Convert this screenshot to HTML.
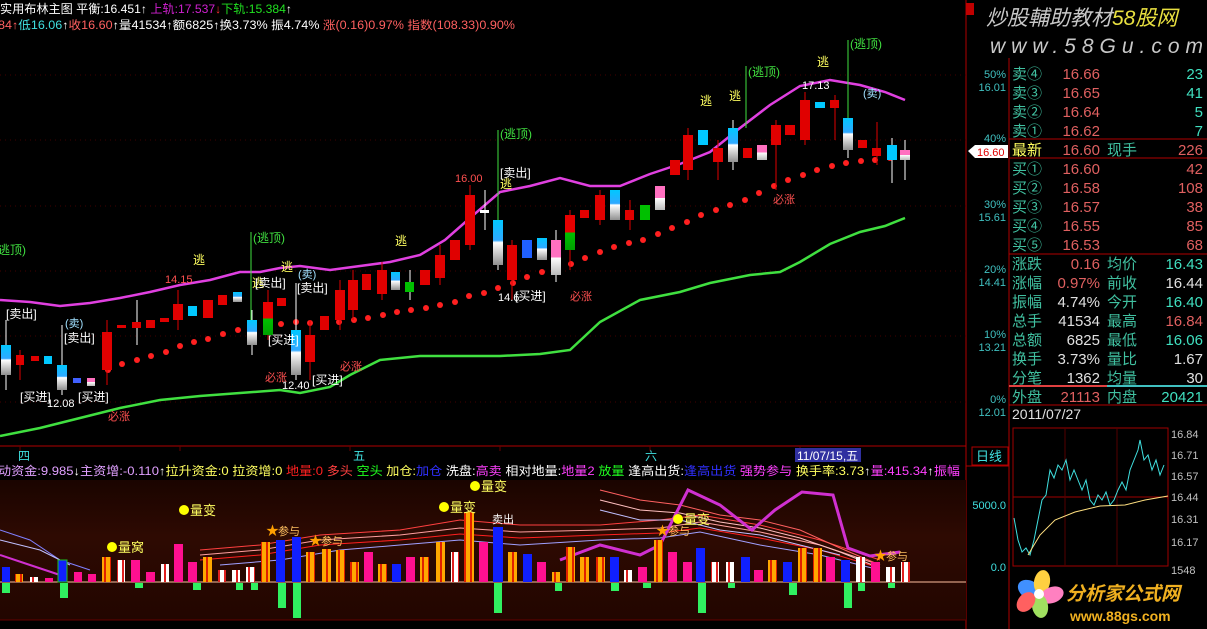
<!DOCTYPE html>
<html><head><meta charset="utf-8"><style>
body{margin:0;background:#000;width:1207px;height:629px;overflow:hidden;font-family:"Liberation Sans","Noto Sans CJK SC",sans-serif}
svg{position:absolute;left:0;top:0}
text{font-family:"Liberation Sans","Noto Sans CJK SC",sans-serif}
</style></head><body>
<svg width="1207" height="629" viewBox="0 0 1207 629" xmlns="http://www.w3.org/2000/svg">
<defs>
<linearGradient id="cw" x1="0" y1="0" x2="0" y2="1"><stop offset="0" stop-color="#00c8ff"/><stop offset=".45" stop-color="#30a8ff"/><stop offset=".5" stop-color="#fff"/><stop offset="1" stop-color="#909090"/></linearGradient>
<linearGradient id="rg" x1="0" y1="0" x2="0" y2="1"><stop offset="0" stop-color="#e80000"/><stop offset=".5" stop-color="#e80000"/><stop offset=".5" stop-color="#00c000"/><stop offset="1" stop-color="#00a000"/></linearGradient>
<linearGradient id="pw" x1="0" y1="0" x2="0" y2="1"><stop offset="0" stop-color="#ff70c0"/><stop offset=".5" stop-color="#ff70c0"/><stop offset=".5" stop-color="#fff"/><stop offset="1" stop-color="#bbb"/></linearGradient>
<linearGradient id="bg2" x1="0" y1="0" x2="0" y2="1"><stop offset="0" stop-color="#1a0400"/><stop offset=".4" stop-color="#2e0a02"/><stop offset="1" stop-color="#220600"/></linearGradient>
<pattern id="po" width="6" height="4" patternUnits="userSpaceOnUse"><rect width="6" height="4" fill="#ffa800"/><rect x="2" width="2" height="4" fill="#e02000"/></pattern>
<pattern id="pwt" width="6" height="4" patternUnits="userSpaceOnUse"><rect width="6" height="4" fill="#fff"/><rect x="2" width="2" height="4" fill="#e02020"/></pattern>
</defs>
<rect x="0" y="0" width="966" height="446" fill="#000"/>
<text x="0" y="13" font-size="12" fill="#fff" textLength="292" lengthAdjust="spacingAndGlyphs">实用布林主图 平衡:16.451↑ <tspan fill="#d020d0">上轨:17.537</tspan><tspan fill="#ff3030">↓</tspan><tspan fill="#20e020">下轨:15.384</tspan>↑</text>
<text x="-2" y="29" font-size="11.5" fill="#fff" textLength="517" lengthAdjust="spacingAndGlyphs"><tspan fill="#ff6060">84↑</tspan><tspan fill="#40e0e0">低16.06</tspan>↑<tspan fill="#ff6060">收16.60</tspan>↑量41534↑额6825↑换3.73% 振4.74% <tspan fill="#ff6060">涨(0.16)0.97% 指数(108.33)0.90%</tspan></text>
<line x1="966" y1="0" x2="966" y2="629" stroke="#b00000"/>
<line x1="0" y1="446" x2="966" y2="446" stroke="#b00000"/>
<g stroke="#400" stroke-dasharray="1,4"><line x1="0" y1="75" x2="966" y2="75"/><line x1="0" y1="140" x2="966" y2="140"/><line x1="0" y1="206" x2="966" y2="206"/><line x1="0" y1="271" x2="966" y2="271"/><line x1="0" y1="336" x2="966" y2="336"/><line x1="0" y1="402" x2="966" y2="402"/></g>
<polyline fill="none" stroke="#e040e0" stroke-width="2.5" points="0,300 30,302 60,306 90,303 120,298 150,292 180,285 210,280 240,272 260,272 280,268 300,266 330,270 360,266 390,262 420,255 445,240 470,218 500,192 530,186 560,178 590,186 620,186 650,174 680,164 710,152 740,128 770,105 800,86 830,80 860,85 885,92 905,100"/>
<polyline fill="none" stroke="#40e040" stroke-width="2.5" points="0,436 40,428 80,418 120,408 160,400 200,396 240,393 280,390 300,393 330,387 350,375 380,360 420,356 460,356 500,356 540,354 570,350 600,322 640,300 680,292 710,283 750,275 780,272 800,262 830,244 860,232 885,226 905,218"/>
<g fill="#ff2020">
<circle cx="108" cy="370" r="3"/><circle cx="122" cy="364" r="3"/><circle cx="137" cy="360" r="3"/><circle cx="151" cy="356" r="3"/><circle cx="166" cy="352" r="3"/><circle cx="180" cy="346" r="3"/><circle cx="194" cy="342" r="3"/><circle cx="208" cy="339" r="3"/><circle cx="223" cy="334" r="3"/><circle cx="238" cy="330" r="3"/><circle cx="252" cy="327" r="3"/><circle cx="267" cy="326" r="3"/><circle cx="281" cy="324" r="3"/><circle cx="296" cy="322" r="3"/><circle cx="310" cy="323" r="3"/><circle cx="325" cy="324" r="3"/><circle cx="339" cy="322" r="3"/><circle cx="354" cy="320" r="3"/><circle cx="368" cy="318" r="3"/><circle cx="383" cy="315" r="3"/><circle cx="397" cy="312" r="3"/><circle cx="411" cy="310" r="3"/><circle cx="426" cy="308" r="3"/><circle cx="440" cy="305" r="3"/><circle cx="455" cy="302" r="3"/><circle cx="469" cy="296" r="3"/><circle cx="484" cy="293" r="3"/><circle cx="498" cy="288" r="3"/><circle cx="513" cy="283" r="3"/><circle cx="527" cy="277" r="3"/><circle cx="542" cy="272" r="3"/><circle cx="556" cy="268" r="3"/><circle cx="571" cy="264" r="3"/><circle cx="585" cy="258" r="3"/><circle cx="600" cy="252" r="3"/><circle cx="614" cy="247" r="3"/><circle cx="629" cy="243" r="3"/><circle cx="643" cy="240" r="3"/><circle cx="658" cy="234" r="3"/><circle cx="672" cy="228" r="3"/><circle cx="687" cy="222" r="3"/><circle cx="701" cy="215" r="3"/><circle cx="716" cy="210" r="3"/><circle cx="730" cy="205" r="3"/><circle cx="745" cy="200" r="3"/><circle cx="759" cy="193" r="3"/><circle cx="774" cy="186" r="3"/><circle cx="788" cy="180" r="3"/><circle cx="803" cy="175" r="3"/><circle cx="817" cy="170" r="3"/><circle cx="832" cy="166" r="3"/><circle cx="846" cy="163" r="3"/><circle cx="861" cy="161" r="3"/><circle cx="875" cy="160" r="3"/><circle cx="890" cy="158" r="3"/><circle cx="904" cy="157" r="3"/>
</g>
<g stroke-width="1">
<g stroke="#fff"><line x1="6" y1="330" x2="6" y2="390"/><line x1="62" y1="325" x2="62" y2="395"/><line x1="252" y1="310" x2="252" y2="355"/><line x1="296" y1="305" x2="296" y2="380"/><line x1="498" y1="200" x2="498" y2="270"/><line x1="556" y1="230" x2="556" y2="282"/><line x1="733" y1="120" x2="733" y2="170"/><line x1="848" y1="108" x2="848" y2="158"/><line x1="892" y1="138" x2="892" y2="183"/><line x1="905" y1="140" x2="905" y2="180"/><line x1="410" y1="270" x2="410" y2="300"/><line x1="137" y1="300" x2="137" y2="345"/><line x1="485" y1="190" x2="485" y2="230"/></g>
<g stroke="#e00000"><line x1="20" y1="350" x2="20" y2="380"/><line x1="107" y1="320" x2="107" y2="385"/><line x1="178" y1="290" x2="178" y2="330"/><line x1="268" y1="290" x2="268" y2="340"/><line x1="310" y1="320" x2="310" y2="380"/><line x1="340" y1="280" x2="340" y2="330"/><line x1="353" y1="270" x2="353" y2="320"/><line x1="382" y1="262" x2="382" y2="300"/><line x1="440" y1="245" x2="440" y2="285"/><line x1="470" y1="185" x2="470" y2="250"/><line x1="512" y1="240" x2="512" y2="300"/><line x1="570" y1="210" x2="570" y2="270"/><line x1="600" y1="190" x2="600" y2="225"/><line x1="688" y1="128" x2="688" y2="180"/><line x1="718" y1="140" x2="718" y2="180"/><line x1="776" y1="120" x2="776" y2="190"/><line x1="805" y1="92" x2="805" y2="145"/><line x1="835" y1="95" x2="835" y2="140"/><line x1="877" y1="122" x2="877" y2="165"/><line x1="630" y1="200" x2="630" y2="230"/></g>
</g>
<g>
<rect x="1" y="345" width="10" height="30" fill="url(#cw)"/>
<rect x="16" y="355" width="8" height="10" fill="#e00000"/>
<rect x="31" y="356" width="8" height="5" fill="#e00000"/>
<rect x="44" y="356" width="8" height="8" fill="#00c8ff"/>
<rect x="57" y="365" width="10" height="25" fill="url(#cw)"/>
<rect x="73" y="378" width="8" height="5" fill="#4060ff"/>
<rect x="87" y="378" width="8" height="8" fill="url(#pw)"/>
<rect x="102" y="332" width="10" height="38" fill="#e00000"/>
<rect x="117" y="325" width="9" height="3" fill="#e00000"/>
<rect x="132" y="322" width="9" height="6" fill="#e00000"/>
<rect x="146" y="320" width="9" height="8" fill="#e00000"/>
<rect x="160" y="318" width="9" height="4" fill="#e00000"/>
<rect x="173" y="304" width="10" height="16" fill="#e00000"/>
<rect x="188" y="306" width="9" height="10" fill="#00c8ff"/>
<rect x="203" y="300" width="10" height="18" fill="#e00000"/>
<rect x="218" y="295" width="9" height="10" fill="#e00000"/>
<rect x="233" y="292" width="9" height="10" fill="url(#cw)"/>
<rect x="247" y="320" width="10" height="25" fill="url(#cw)"/>
<rect x="263" y="302" width="10" height="33" fill="url(#rg)"/>
<rect x="277" y="298" width="9" height="8" fill="#e00000"/>
<rect x="291" y="330" width="10" height="45" fill="url(#cw)"/>
<rect x="305" y="335" width="10" height="27" fill="#e00000"/>
<rect x="320" y="316" width="9" height="14" fill="#e00000"/>
<rect x="335" y="290" width="10" height="30" fill="#e00000"/>
<rect x="348" y="280" width="10" height="30" fill="#e00000"/>
<rect x="362" y="274" width="9" height="16" fill="#e00000"/>
<rect x="377" y="270" width="10" height="24" fill="#e00000"/>
<rect x="391" y="272" width="9" height="18" fill="url(#cw)"/>
<rect x="405" y="282" width="9" height="10" fill="#00c000"/>
<rect x="420" y="270" width="10" height="15" fill="#e00000"/>
<rect x="435" y="255" width="10" height="23" fill="#e00000"/>
<rect x="450" y="240" width="10" height="20" fill="#e00000"/>
<rect x="465" y="195" width="10" height="50" fill="#e00000"/>
<rect x="480" y="210" width="9" height="3" fill="#fff"/>
<rect x="493" y="220" width="10" height="45" fill="url(#cw)"/>
<rect x="507" y="245" width="10" height="35" fill="#e00000"/>
<rect x="522" y="240" width="10" height="18" fill="#2060ff"/>
<rect x="537" y="238" width="10" height="22" fill="url(#cw)"/>
<rect x="551" y="240" width="10" height="35" fill="url(#pw)"/>
<rect x="565" y="215" width="10" height="35" fill="url(#rg)"/>
<rect x="580" y="210" width="9" height="8" fill="#e00000"/>
<rect x="595" y="195" width="10" height="25" fill="#e00000"/>
<rect x="610" y="190" width="10" height="30" fill="url(#cw)"/>
<rect x="625" y="210" width="9" height="10" fill="#e00000"/>
<rect x="640" y="205" width="10" height="15" fill="#00c000"/>
<rect x="655" y="186" width="10" height="24" fill="url(#pw)"/>
<rect x="670" y="160" width="10" height="15" fill="#e00000"/>
<rect x="683" y="135" width="10" height="35" fill="#e00000"/>
<rect x="698" y="130" width="10" height="15" fill="#00c8ff"/>
<rect x="713" y="148" width="10" height="14" fill="#e00000"/>
<rect x="728" y="128" width="10" height="34" fill="url(#cw)"/>
<rect x="743" y="148" width="9" height="10" fill="#e00000"/>
<rect x="757" y="145" width="10" height="15" fill="url(#pw)"/>
<rect x="771" y="125" width="10" height="20" fill="#e00000"/>
<rect x="785" y="125" width="10" height="10" fill="#e00000"/>
<rect x="800" y="100" width="10" height="40" fill="#e00000"/>
<rect x="815" y="102" width="10" height="6" fill="#00c8ff"/>
<rect x="830" y="100" width="9" height="8" fill="#e00000"/>
<rect x="843" y="118" width="10" height="32" fill="url(#cw)"/>
<rect x="858" y="140" width="9" height="8" fill="#e00000"/>
<rect x="872" y="148" width="9" height="8" fill="#e00000"/>
<rect x="887" y="145" width="10" height="15" fill="#00c8ff"/>
<rect x="900" y="150" width="10" height="10" fill="url(#pw)"/>
</g>
<g stroke="#40e040"><line x1="251" y1="232" x2="251" y2="320"/><line x1="498" y1="130" x2="498" y2="220"/><line x1="746" y1="66" x2="746" y2="128"/><line x1="848" y1="40" x2="848" y2="118"/></g>
<g stroke="#fff"><line x1="6" y1="320" x2="6" y2="345"/><line x1="62" y1="330" x2="62" y2="365"/><line x1="296" y1="283" x2="296" y2="330"/></g>
<g font-size="12">
<text x="-6" y="254" fill="#40e040">(逃顶)</text>
<text x="253" y="242" fill="#40e040">(逃顶)</text>
<text x="500" y="138" fill="#40e040">(逃顶)</text>
<text x="748" y="76" fill="#40e040">(逃顶)</text>
<text x="850" y="48" fill="#40e040">(逃顶)</text>
<g fill="#ffff60"><text x="193" y="264">逃</text><text x="281" y="271">逃</text><text x="395" y="245">逃</text><text x="500" y="188">逃</text><text x="700" y="105">逃</text><text x="729" y="100">逃</text><text x="817" y="66">逃</text><text x="252" y="287">逃</text></g>
<g fill="#fff"><text x="6" y="318">[卖出]</text><text x="64" y="342">[卖出]</text><text x="255" y="287">[卖出]</text><text x="297" y="292">[卖出]</text><text x="500" y="177">[卖出]</text>
<text x="20" y="401">[买进]</text><text x="78" y="401">[买进]</text><text x="268" y="344">[买进]</text><text x="312" y="384">[买进]</text><text x="515" y="300">[买进]</text></g>
<g fill="#a0e0ff" font-size="11"><text x="65" y="327">(卖)</text><text x="298" y="278">(卖)</text><text x="863" y="97">(卖)</text></g>
<g fill="#fff" font-size="11"><text x="47" y="407">12.08</text><text x="282" y="389">12.40</text><text x="498" y="301">14.6</text><text x="802" y="89">17.13</text></g>
<g fill="#ff5050" font-size="11"><text x="165" y="283">14.15</text><text x="455" y="182">16.00</text><text x="108" y="420">必涨</text><text x="265" y="381">必涨</text><text x="340" y="370">必涨</text><text x="570" y="300">必涨</text><text x="773" y="203">必涨</text></g>
</g>
<g font-size="11" fill="#40c0c0" text-anchor="end">
<text x="1006" y="78">50%</text><text x="1006" y="91">16.01</text>
<text x="1006" y="142">40%</text>
<text x="1006" y="208">30%</text><text x="1006" y="221">15.61</text>
<text x="1006" y="273">20%</text><text x="1006" y="286">14.41</text>
<text x="1006" y="338">10%</text><text x="1006" y="351">13.21</text>
<text x="1006" y="403">0%</text><text x="1006" y="416">12.01</text>
</g>
<polygon points="968,151 975,145 1008,145 1008,158 975,158" fill="#fff"/>
<text x="977" y="156" font-size="11" fill="#e00000">16.60</text>
<rect x="966" y="3" width="8" height="12" fill="#c00000"/>
<text x="986" y="25" font-size="21" font-style="italic" fill="#c8c8c8">炒股輔助教材<tspan fill="#e8e040">58股网</tspan></text>
<text x="990" y="53" font-size="21" font-style="italic" fill="#c8c8c8" letter-spacing="6">www.58Gu.com</text>
<line x1="1009" y1="58" x2="1009" y2="629" stroke="#b00000"/>
<g stroke="#b00000"><line x1="1009" y1="139" x2="1207" y2="139"/><line x1="1009" y1="158" x2="1207" y2="158"/><line x1="1009" y1="254" x2="1207" y2="254"/><line x1="1009" y1="405" x2="1207" y2="405"/></g>
<line x1="1009" y1="386" x2="1107" y2="386" stroke="#e04040" stroke-width="2"/><line x1="1107" y1="386" x2="1207" y2="386" stroke="#40c0c0" stroke-width="2"/>
<g font-size="15">
<g fill="#40c0a0"><text x="1012" y="79">卖④</text><text x="1012" y="98">卖③</text><text x="1012" y="117">卖②</text><text x="1012" y="136">卖①</text>
<text x="1012" y="174">买①</text><text x="1012" y="193">买②</text><text x="1012" y="212">买③</text><text x="1012" y="231">买④</text><text x="1012" y="250">买⑤</text>
<text x="1012" y="269">涨跌</text><text x="1012" y="288">涨幅</text><text x="1012" y="307">振幅</text><text x="1012" y="326">总手</text><text x="1012" y="345">总额</text><text x="1012" y="364">换手</text><text x="1012" y="383">分笔</text><text x="1012" y="402">外盘</text>
<text x="1107" y="155">现手</text><text x="1107" y="269">均价</text><text x="1107" y="288">前收</text><text x="1107" y="307">今开</text><text x="1107" y="326">最高</text><text x="1107" y="345">最低</text><text x="1107" y="364">量比</text><text x="1107" y="383">均量</text><text x="1107" y="402">内盘</text></g>
<text x="1012" y="155" fill="#ffff60">最新</text>
<g fill="#e06060" text-anchor="end"><text x="1100" y="79">16.66</text><text x="1100" y="98">16.65</text><text x="1100" y="117">16.64</text><text x="1100" y="136">16.62</text><text x="1100" y="155">16.60</text><text x="1100" y="174">16.60</text><text x="1100" y="193">16.58</text><text x="1100" y="212">16.57</text><text x="1100" y="231">16.55</text><text x="1100" y="250">16.53</text><text x="1100" y="269">0.16</text><text x="1100" y="288">0.97%</text><text x="1100" y="402">21113</text>
<text x="1203" y="155">226</text><text x="1203" y="174">42</text><text x="1203" y="193">108</text><text x="1203" y="212">38</text><text x="1203" y="231">85</text><text x="1203" y="250">68</text><text x="1203" y="326">16.84</text></g>
<g fill="#e0e0e0" text-anchor="end"><text x="1100" y="307">4.74%</text><text x="1100" y="326">41534</text><text x="1100" y="345">6825</text><text x="1100" y="364">3.73%</text><text x="1100" y="383">1362</text><text x="1203" y="288">16.44</text><text x="1203" y="364">1.67</text><text x="1203" y="383">30</text></g>
<g fill="#40e0c0" text-anchor="end"><text x="1203" y="79">23</text><text x="1203" y="98">41</text><text x="1203" y="117">5</text><text x="1203" y="136">7</text><text x="1203" y="269">16.43</text><text x="1203" y="307">16.40</text><text x="1203" y="345">16.06</text><text x="1203" y="402">20421</text></g>
<text x="1012" y="419" fill="#e0e0e0" font-size="14">2011/07/27</text>
</g>
<g font-size="12" fill="#40e0e0"><text x="18" y="460">四</text><text x="353" y="460">五</text><text x="645" y="460">六</text></g>
<g stroke="#600"><line x1="20" y1="446" x2="20" y2="451"/><line x1="180" y1="446" x2="180" y2="451"/><line x1="350" y1="446" x2="350" y2="451"/><line x1="500" y1="446" x2="500" y2="451"/><line x1="650" y1="446" x2="650" y2="451"/><line x1="800" y1="446" x2="800" y2="451"/></g>
<rect x="795" y="448" width="66" height="14" fill="#3030a0"/>
<text x="797" y="460" font-size="12" fill="#fff">11/07/15,五</text>
<rect x="972" y="447" width="36" height="18" fill="#000" stroke="#b00000"/>
<text x="976" y="461" font-size="13" fill="#40e0e0">日线</text>
<text x="-2" y="475" font-size="12" fill="#fff" textLength="962" lengthAdjust="spacingAndGlyphs"><tspan fill="#e0a0ff">动资金:9.985</tspan>↓<tspan fill="#e0a0ff">主资增:-0.110</tspan>↑<tspan fill="#ffff60">拉升资金:0 拉资增:0</tspan> <tspan fill="#ff2020">地量:0</tspan> <tspan fill="#ff4040">多头</tspan> <tspan fill="#20ff20">空头</tspan> <tspan fill="#ffff60">加仓:</tspan><tspan fill="#3030ff">加仓</tspan> 洗盘:<tspan fill="#ff40ff">高卖</tspan> 相对地量:<tspan fill="#ff40ff">地量2</tspan> <tspan fill="#20ff20">放量</tspan> 逢高出货:<tspan fill="#3030ff">逢高出货</tspan> <tspan fill="#ff40ff">强势参与</tspan> <tspan fill="#ffff60">换手率:3.73</tspan>↑<tspan fill="#ff40ff">量:415.34</tspan>↑<tspan fill="#ff40ff">振幅</tspan></text>
<rect x="0" y="480" width="966" height="140" fill="url(#bg2)"/>
<line x1="0" y1="620" x2="966" y2="620" stroke="#600"/>
<g fill="none" stroke-width="1">
<polyline stroke="#8080ff" points="0,530 30,540 60,560 90,570"/>
<polyline stroke="#c0c0ff" points="0,540 40,550 70,565"/>
<polyline stroke="#ff4040" points="200,550 260,545 320,535 400,530 460,520 520,525 600,525 660,520 700,515 760,525 820,540 880,560"/>
<polyline stroke="#ffa0a0" points="200,555 260,550 320,540 400,535 460,528 520,532 600,530 660,528 700,522 760,532 820,545 880,565"/>
<polyline stroke="#ff2020" points="200,560 260,555 320,545 400,540 460,534 520,538 600,535 660,533 700,528 760,538 820,550 880,568"/>
<polyline stroke="#a0a0ff" points="220,565 280,560 340,550 400,545 460,540 520,545 600,540 660,538 700,532 760,545 820,555 880,570"/>
<polyline stroke="#ff6060" points="600,490 640,500 680,505 720,515 760,520 800,530 840,548 880,565"/>
<polyline stroke="#ffc0c0" points="600,500 640,510 680,513 720,522 760,528 800,538 840,552 880,568"/>
<polyline stroke="#c0c0ff" points="600,510 640,520 680,520 720,530 760,535 800,545 840,555"/>
</g>
<polyline fill="none" stroke="#d030d0" stroke-width="3" points="560,560 600,545 640,555 660,545 688,490 720,505 752,530 775,510 802,492 833,495 848,548 870,556 900,552"/>
<polyline fill="none" stroke="#d030d0" stroke-width="2" points="0,555 30,565 60,575"/>
<line x1="0" y1="582" x2="966" y2="582" stroke="#ffc0a0"/>
<g>
<rect x="2" y="567" width="8" height="15" fill="#1020ff"/><rect x="15" y="574" width="8" height="8" fill="url(#po)"/><rect x="30" y="577" width="8" height="5" fill="url(#pwt)"/><rect x="45" y="578" width="8" height="4" fill="#ff1090"/><rect x="58" y="560" width="9" height="22" fill="#1020ff" stroke="#20c020"/><rect x="74" y="572" width="8" height="10" fill="#ff1090"/><rect x="88" y="574" width="8" height="8" fill="#ff1090"/>
<rect x="102" y="557" width="9" height="25" fill="url(#po)"/><rect x="117" y="560" width="8" height="22" fill="url(#pwt)"/><rect x="131" y="560" width="9" height="22" fill="#ff1090"/><rect x="146" y="572" width="9" height="10" fill="#ff1090"/><rect x="161" y="564" width="8" height="18" fill="url(#pwt)"/><rect x="174" y="544" width="9" height="38" fill="#ff1090"/><rect x="188" y="562" width="9" height="20" fill="#ff1090"/>
<rect x="203" y="557" width="9" height="25" fill="url(#po)"/><rect x="218" y="570" width="8" height="12" fill="url(#pwt)"/><rect x="232" y="570" width="8" height="12" fill="url(#pwt)"/><rect x="246" y="567" width="9" height="15" fill="url(#pwt)"/><rect x="261" y="542" width="9" height="40" fill="url(#po)"/><rect x="276" y="540" width="9" height="42" fill="#1020ff"/><rect x="292" y="537" width="9" height="45" fill="#1020ff"/><rect x="306" y="552" width="9" height="30" fill="url(#po)"/><rect x="322" y="549" width="9" height="33" fill="url(#po)"/><rect x="336" y="550" width="9" height="32" fill="url(#po)"/><rect x="350" y="562" width="9" height="20" fill="url(#po)"/><rect x="364" y="552" width="9" height="30" fill="#ff1090"/><rect x="378" y="564" width="9" height="18" fill="url(#po)"/><rect x="392" y="564" width="9" height="18" fill="#1020ff"/><rect x="406" y="557" width="9" height="25" fill="#ff1090"/><rect x="420" y="557" width="9" height="25" fill="url(#po)"/><rect x="436" y="542" width="9" height="40" fill="url(#po)"/><rect x="451" y="552" width="8" height="30" fill="url(#pwt)"/><rect x="464" y="512" width="10" height="70" fill="url(#po)"/><rect x="479" y="542" width="9" height="40" fill="#ff1090"/><rect x="493" y="527" width="10" height="55" fill="#1020ff"/><rect x="508" y="552" width="9" height="30" fill="url(#po)"/><rect x="523" y="554" width="9" height="28" fill="#1020ff"/><rect x="537" y="562" width="9" height="20" fill="#ff1090"/><rect x="552" y="572" width="8" height="10" fill="url(#po)"/><rect x="566" y="547" width="9" height="35" fill="url(#po)"/><rect x="580" y="557" width="9" height="25" fill="url(#po)"/><rect x="596" y="557" width="9" height="25" fill="url(#po)"/><rect x="610" y="557" width="9" height="25" fill="#1020ff"/><rect x="624" y="570" width="8" height="12" fill="url(#pwt)"/><rect x="638" y="567" width="9" height="15" fill="#ff1090"/>
<rect x="654" y="540" width="9" height="42" fill="url(#po)"/><rect x="668" y="552" width="9" height="30" fill="#ff1090"/><rect x="683" y="562" width="9" height="20" fill="#ff1090"/><rect x="696" y="548" width="9" height="34" fill="#1020ff"/><rect x="711" y="562" width="8" height="20" fill="url(#pwt)"/><rect x="726" y="562" width="8" height="20" fill="url(#pwt)"/><rect x="741" y="557" width="9" height="25" fill="#1020ff"/><rect x="754" y="570" width="9" height="12" fill="#ff1090"/><rect x="768" y="560" width="9" height="22" fill="url(#po)"/><rect x="783" y="562" width="9" height="20" fill="#1020ff"/><rect x="798" y="548" width="9" height="34" fill="url(#po)"/><rect x="813" y="548" width="9" height="34" fill="url(#po)"/><rect x="826" y="557" width="9" height="25" fill="#ff1090"/><rect x="841" y="560" width="9" height="22" fill="#1020ff"/><rect x="856" y="557" width="9" height="25" fill="url(#pwt)"/><rect x="871" y="562" width="9" height="20" fill="#ff1090"/><rect x="886" y="567" width="9" height="15" fill="url(#pwt)"/><rect x="901" y="562" width="9" height="20" fill="url(#pwt)"/>
</g>
<g fill="#30f060">
<rect x="2" y="583" width="8" height="10"/><rect x="60" y="583" width="8" height="15"/><rect x="135" y="583" width="8" height="5"/><rect x="193" y="583" width="8" height="7"/><rect x="236" y="583" width="7" height="7"/><rect x="251" y="583" width="7" height="7"/><rect x="278" y="583" width="8" height="25"/><rect x="293" y="583" width="8" height="35"/><rect x="494" y="583" width="8" height="30"/><rect x="555" y="583" width="7" height="8"/><rect x="611" y="583" width="8" height="8"/><rect x="643" y="583" width="8" height="5"/><rect x="698" y="583" width="8" height="30"/><rect x="728" y="583" width="7" height="5"/><rect x="789" y="583" width="8" height="12"/><rect x="844" y="583" width="8" height="25"/><rect x="858" y="583" width="7" height="8"/><rect x="888" y="583" width="7" height="5"/>
</g>
<g font-size="13" fill="#ffff60">
<circle cx="112" cy="547" r="5" fill="#ffff00"/><text x="118" y="552">量窝</text>
<circle cx="184" cy="510" r="5" fill="#ffff00"/><text x="190" y="515">量变</text>
<circle cx="444" cy="507" r="5" fill="#ffff00"/><text x="450" y="512">量变</text>
<circle cx="475" cy="486" r="5" fill="#ffff00"/><text x="481" y="491">量变</text>
<circle cx="678" cy="519" r="5" fill="#ffff00"/><text x="684" y="524">量变</text>
<g fill="#ffa000"><text x="266" y="535">★</text><text x="309" y="545">★</text><text x="656" y="535">★</text><text x="874" y="560">★</text></g>
<g fill="#ffc060" font-size="11"><text x="278" y="535">参与</text><text x="321" y="545">参与</text><text x="668" y="535">参与</text><text x="886" y="560">参与</text></g>
<text x="492" y="523" fill="#fff" font-size="11">卖出</text>
</g>
<g font-size="11" fill="#40e0e0" text-anchor="end"><text x="1006" y="509">5000.0</text><text x="1006" y="571">0.0</text></g>
<line x1="1009" y1="466" x2="966" y2="466" stroke="#b00000"/>
<rect x="1013" y="428" width="155" height="138" fill="#000" stroke="#a00000"/>
<g stroke="#500"><line x1="1013" y1="497" x2="1168" y2="497" stroke="#a00000"/><line x1="1065" y1="428" x2="1065" y2="566"/><line x1="1117" y1="428" x2="1117" y2="566"/></g>
<polyline fill="none" stroke="#40e0e0" points="1014,518 1018,540 1022,552 1026,548 1030,555 1034,540 1038,520 1042,500 1046,495 1050,470 1054,478 1058,465 1062,470 1066,460 1070,480 1074,470 1078,480 1082,490 1086,480 1090,500 1094,505 1098,495 1102,500 1106,492 1110,505 1114,500 1118,490 1122,482 1126,490 1130,470 1134,460 1138,450 1140,440 1144,460 1148,455 1152,470 1156,460 1160,475 1164,465"/>
<polyline fill="none" stroke="#ffe080" points="1028,555 1040,535 1055,520 1075,512 1100,506 1125,505 1145,500 1168,496"/>
<g font-size="11" fill="#c0c0c0"><text x="1171" y="438">16.84</text><text x="1171" y="459">16.71</text><text x="1171" y="480">16.57</text><text x="1171" y="501">16.44</text><text x="1171" y="523">16.31</text><text x="1171" y="546">16.17</text><text x="1171" y="574">1548</text></g>
<g>
<ellipse cx="1030" cy="590" rx="9" ry="13" fill="#4090ff" transform="rotate(-60 1030 590)"/>
<ellipse cx="1042" cy="582" rx="8" ry="12" fill="#ffd040" transform="rotate(10 1042 582)"/>
<ellipse cx="1052" cy="595" rx="8" ry="12" fill="#ff80c0" transform="rotate(70 1052 595)"/>
<ellipse cx="1040" cy="606" rx="8" ry="12" fill="#a0e060" transform="rotate(-10 1040 606)"/>
<ellipse cx="1026" cy="602" rx="8" ry="11" fill="#ff6060" transform="rotate(40 1026 602)"/>
<circle cx="1039" cy="594" r="5" fill="#fff"/>
</g>
<text x="1066" y="600" font-size="19" font-weight="bold" font-style="italic" fill="#f0b020">分析家公式网</text>
<text x="1070" y="621" font-size="14" font-weight="bold" fill="#f0b020">www.88gs.com</text>
</svg>
</body></html>
